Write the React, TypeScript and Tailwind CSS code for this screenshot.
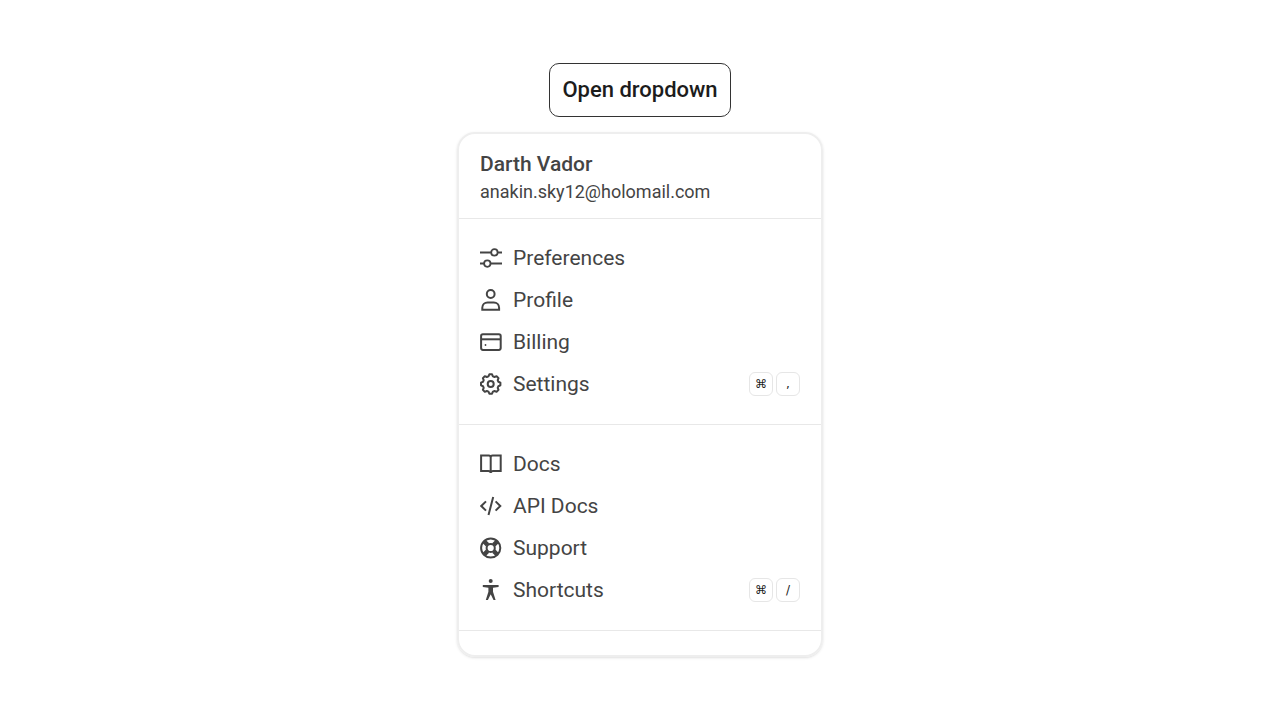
import type { ReactNode } from "react";

type Item = { label: string; icon: ReactNode; keys?: string[] };

function Icon({ children }: { children: ReactNode }) {
  return (
    <svg
      className="size-[22px] shrink-0"
      viewBox="0 0 22 22"
      fill="none"
      stroke="currentColor"
      strokeWidth="2"
      aria-hidden="true"
    >
      {children}
    </svg>
  );
}

const gearPoints = Array.from({ length: 8 }, (_, i) => i * 45)
  .flatMap((a) => [
    [a - 16, 8],
    [a - 8, 9.8],
    [a + 8, 9.8],
    [a + 16, 8],
  ])
  .map(([deg, r]) => {
    const t = ((deg - 90) * Math.PI) / 180;
    return `${(10.7 + r * Math.cos(t)).toFixed(2)},${(11 + r * Math.sin(t)).toFixed(2)}`;
  })
  .join(" ");

const account: Item[] = [
  {
    label: "Preferences",
    icon: (
      <Icon>
        <path d="M0 5.4h11.2M17.6 5.4H22M0 16.6h4.1M10.5 16.6H22" />
        <circle cx="14.4" cy="5.4" r="3.2" strokeWidth="1.8" />
        <circle cx="7.3" cy="16.6" r="3.2" strokeWidth="1.8" />
      </Icon>
    ),
  },
  {
    label: "Profile",
    icon: (
      <Icon>
        <circle cx="10.7" cy="5" r="3.9" />
        <path d="M2.3 20.7v-1.9c0-3 2.3-5.3 5.3-5.3h6.2c3 0 5.3 2.3 5.3 5.3v1.9z" />
      </Icon>
    ),
  },
  {
    label: "Billing",
    icon: (
      <Icon>
        <rect x="1.1" y="3.3" width="19.6" height="15.6" rx="1.8" />
        <path d="M1 8.3h20" />
        <circle cx="5.5" cy="14" r="0.9" fill="currentColor" stroke="none" />
      </Icon>
    ),
  },
  {
    label: "Settings",
    keys: ["⌘", ","],
    icon: (
      <Icon>
        <polygon points={gearPoints} strokeLinejoin="round" />
        <circle cx="10.7" cy="11" r="3" />
      </Icon>
    ),
  },
];

const help: Item[] = [
  {
    label: "Docs",
    icon: (
      <Icon>
        <path d="M10.7 4.4c0-1.1-.8-1.9-1.9-1.9H1.1v15.4h7.2c1.3 0 2.4.7 2.4 2 0-1.3 1.1-2 2.4-2h7.6V2.5h-8.1c-1.1 0-1.9.8-1.9 1.9zM10.7 4.2v15.2" />
      </Icon>
    ),
  },
  {
    label: "API Docs",
    icon: (
      <Icon>
        <path d="M6 6.4 1.3 11 6 15.6M15.6 6.4l4.7 4.6-4.7 4.6M13.2 2 8.5 20" />
      </Icon>
    ),
  },
  {
    label: "Support",
    icon: (
      <Icon>
        <circle cx="10.7" cy="11" r="9.6" />
        <circle cx="10.7" cy="11" r="4.1" />
        <path
          d="M4.2 4.5l3.4 3.4M17.2 4.5l-3.4 3.4M4.2 17.5l3.4-3.4M17.2 17.5l-3.4-3.4"
          strokeWidth="4.5"
        />
      </Icon>
    ),
  },
  {
    label: "Shortcuts",
    keys: ["⌘", "/"],
    icon: (
      <Icon>
        <g fill="currentColor" stroke="none">
          <circle cx="10.7" cy="2.1" r="2" />
          <path d="M2.8 6.1h15.8v1.8l-5.6.8v4.1l2.6 8.3h-2.1l-2.7-5.6h-.2l-2.7 5.6H5.8l2.6-8.3V8.7l-5.6-.8z" />
        </g>
      </Icon>
    ),
  },
];

function Section({ items }: { items: Item[] }) {
  return (
    <ul className="border-b border-[#e8e8e8] pt-[18px] pb-[19px]">
      {items.map(({ label, icon, keys }) => (
        <li key={label}>
          <button
            type="button"
            className="flex h-[42px] w-full items-center gap-[11px] px-[21px] text-left"
          >
            {icon}
            <span className="grow">{label}</span>
            {keys && (
              <span className="flex gap-[3px]">
                {keys.map((key) => (
                  <kbd
                    key={key}
                    className="flex size-6 items-center justify-center rounded-md border border-[#e6e6e6] font-['DejaVu_Sans',sans-serif] text-xs leading-4 text-[#1c1c1c]"
                  >
                    {key}
                  </kbd>
                ))}
              </span>
            )}
          </button>
        </li>
      ))}
    </ul>
  );
}

export default function App() {
  return (
    <main className="flex min-h-screen flex-col items-center bg-white px-4 pt-[63px] pb-8 font-['Roboto','Noto_Sans',sans-serif] text-[21px] leading-7 text-[#444]">
      <button
        type="button"
        aria-expanded="true"
        className="h-[54px] rounded-[10px] border border-[#333] px-3 text-[22px] font-medium text-[#1c1c1c]"
      >
        Open dropdown
      </button>
      <div className="mt-[15px] w-full max-w-[366px] rounded-[18px] border-2 border-[#eeeeee] pb-6 shadow-sm">
        <div className="border-b border-[#e8e8e8] px-[21px] pt-4 pb-3">
          <p className="font-medium">Darth Vador</p>
          <p className="text-lg leading-7">anakin.sky12@holomail.com</p>
        </div>
        <Section items={account} />
        <Section items={help} />
      </div>
    </main>
  );
}
